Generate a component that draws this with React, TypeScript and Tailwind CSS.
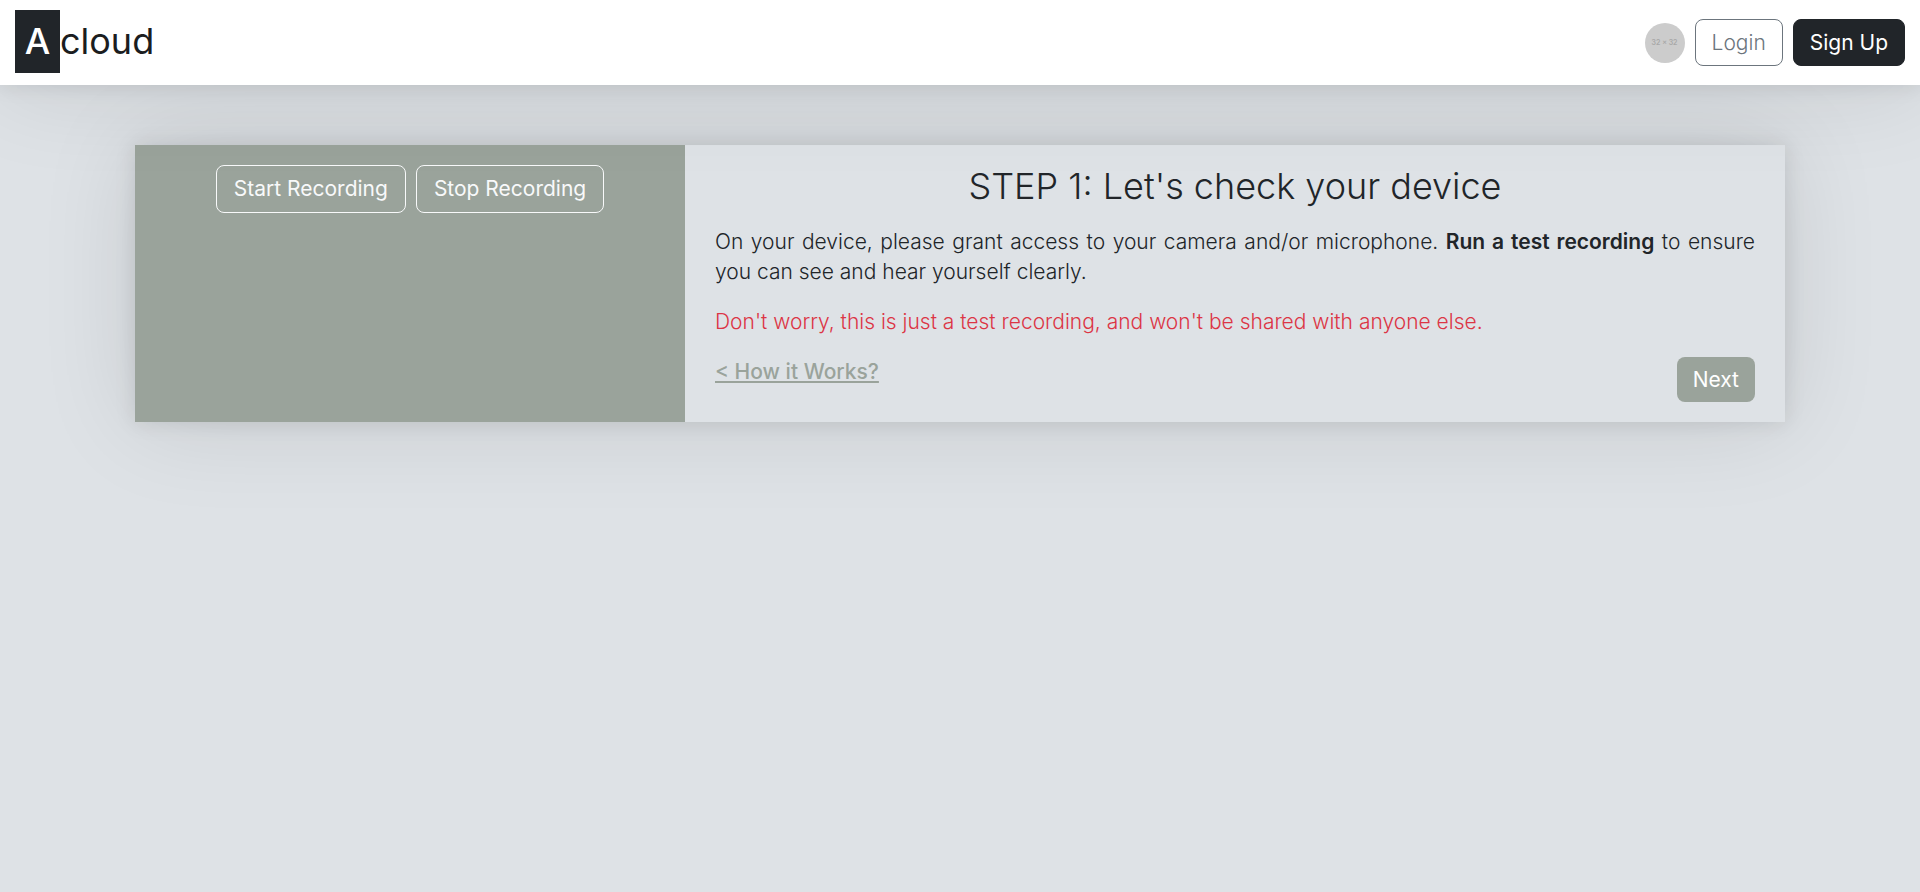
import type { ReactNode } from "react";

function Navbar() {
  return (
    <header className="relative z-10 flex items-center justify-between bg-white px-[15px] py-[10px] shadow-[0_0_100px_rgba(0,0,0,0.11),0_0_20px_rgba(0,0,0,0.11)]">
      <a href="#" className="mb-[2px] flex items-center text-4xl leading-[63px] text-[#1b1d20]">
        <span className="w-[45px] bg-[#212529] text-center font-medium text-white">A</span>
        <span>cloud</span>
      </a>
      <nav className="flex items-center gap-[10px]">
        <span className="flex size-10 items-center justify-center rounded-full bg-[#cccccc] text-[7px] font-semibold text-[#a8a8a8]">
          32 x 32
        </span>
        <button
          type="button"
          className="rounded-lg border border-[#6c757d] px-4 py-2 text-[21px] leading-[29px] font-light text-[#6c757d]"
        >
          Login
        </button>
        <button
          type="button"
          className="rounded-lg border border-[#212529] bg-[#212529] px-4 py-2 text-[21px] leading-[29px] text-white"
        >
          Sign Up
        </button>
      </nav>
    </header>
  );
}

function RecorderButton({ children }: { children: ReactNode }) {
  return (
    <button
      type="button"
      className="rounded-lg border border-[#f8f9fa] px-[17px] py-2 text-[21px] leading-[30px] text-[#f8f9fa]"
    >
      {children}
    </button>
  );
}

export default function App() {
  return (
    <div className="min-h-screen bg-[#dee2e6] font-['Inter','Liberation_Sans',sans-serif] text-[21px] leading-[30px] text-[#212529]">
      <Navbar />
      <main className="mx-auto mt-[60px] grid max-w-[1650px] grid-cols-3 bg-[#dee2e6] shadow-[0_0_100px_rgba(0,0,0,0.11),0_0_20px_rgba(0,0,0,0.11)]">
        <section className="flex items-start justify-center gap-[10px] bg-[#9aa39b] py-5">
          <RecorderButton>Start Recording</RecorderButton>
          <RecorderButton>Stop Recording</RecorderButton>
        </section>
        <section className="col-span-2 flex flex-col gap-5 px-[30px] py-5 font-light">
          <h1 className="text-center text-4xl leading-[42px]">STEP 1: Let's check your device</h1>
          <p className="text-justify">
            On your device, please grant access to your camera and/or microphone.{" "}
            <b className="font-semibold">Run a test recording</b> to ensure you can see and hear yourself clearly.
          </p>
          <p className="text-[#dc3545]">
            Don't worry, this is just a test recording, and won't be shared with anyone else.
          </p>
          <div className="flex items-start justify-between">
            <a href="#" className="font-medium text-[#9aa39b] underline">
              &lt; How it Works?
            </a>
            <button type="button" className="rounded-lg bg-[#9aa39b] px-4 py-2 leading-[29px] font-normal text-white">
              Next
            </button>
          </div>
        </section>
      </main>
    </div>
  );
}
